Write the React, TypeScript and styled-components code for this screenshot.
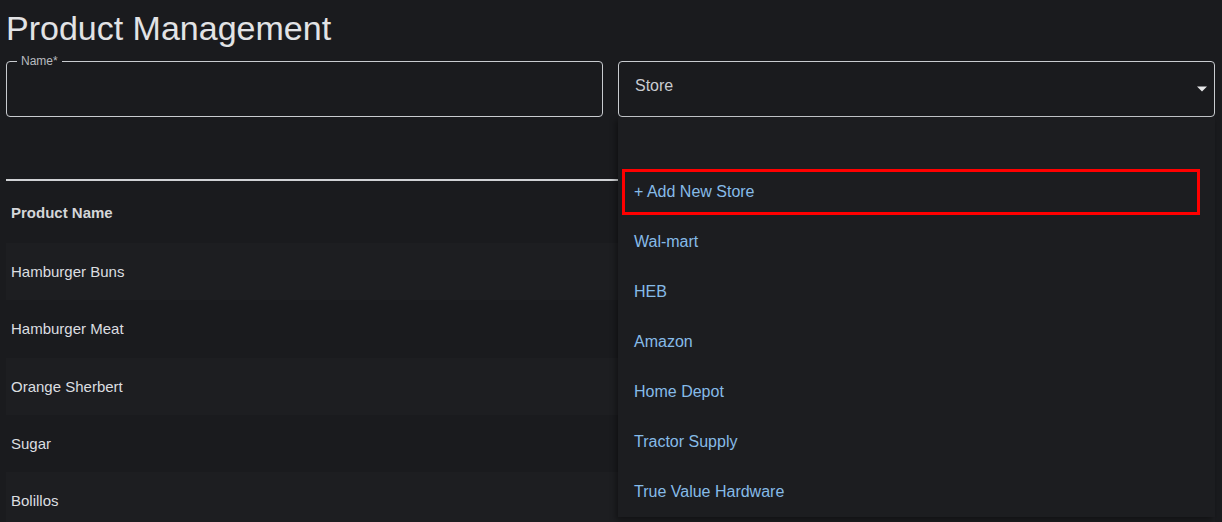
import React, { FC } from "react";
import styled, { createGlobalStyle } from "styled-components";

const GlobalStyle = createGlobalStyle`
  body {
    margin: 0;
    background: #1a1b1e;
    font-family: "Liberation Sans", Arial, sans-serif;
  }
`;

const Page = styled.div`
  position: relative;
  padding: 0 7px 0 6px;
  height: 522px;
  overflow: hidden;
`;

const Title = styled.h1`
  margin: 8px 0 0 0;
  font-size: 34px;
  line-height: 41px;
  font-weight: 400;
  color: #e2e3e5;
`;

const FieldRow = styled.div`
  display: grid;
  grid-template-columns: 1fr 1fr;
  column-gap: 15px;
  margin-top: 12px;
`;

const Outlined = styled.fieldset`
  position: relative;
  margin: 0;
  padding: 0 16px;
  height: 56px;
  box-sizing: border-box;
  border: 1px solid #c9ccd0;
  border-radius: 4px;
  display: flex;
  align-items: center;
`;

const Legend = styled.legend`
  position: absolute;
  top: -8px;
  left: 10px;
  padding: 0 4px;
  background: #1a1b1e;
  font-size: 12px;
  line-height: 14px;
  color: #b9bcc0;
`;

const SelectValue = styled.span`
  flex: 1;
  font-size: 16px;
  color: #c9ccd0;
  margin-top: -6px;
`;

const Arrow = styled.svg`
  position: absolute;
  right: 6px;
  top: 23px;
`;

const Table = styled.div`
  margin-top: 62px;
  border-top: 2px solid #d0d2d5;
`;

const HeaderRow = styled.div`
  height: 62px;
  display: flex;
  align-items: center;
  padding-left: 5px;
  font-size: 15px;
  font-weight: 700;
  color: #d4d6d9;
`;

const Row = styled.div<{ $striped: boolean }>`
  height: 57.3px;
  display: flex;
  align-items: center;
  padding-left: 5px;
  font-size: 15px;
  color: #dcdee0;
  background: ${(p) => (p.$striped ? "#1d1e21" : "transparent")};
`;

const Menu = styled.ul`
  position: absolute;
  top: 117px;
  left: 618px;
  width: 597px;
  margin: 0;
  padding: 0;
  list-style: none;
  background: #1c1d20;
  box-shadow: -2px 3px 6px rgba(0, 0, 0, 0.4);
`;

const Item = styled.li`
  height: 50px;
  display: flex;
  align-items: center;
  padding-left: 16px;
  font-size: 16px;
  color: #86bbe8;
`;

const HighlightItem = styled.li`
  height: 50px;
  box-sizing: border-box;
  padding: 2px 15px 2px 4px;
  display: flex;
`;

const HighlightBox = styled.div`
  flex: 1;
  border: 3px solid #ff0000;
  display: flex;
  align-items: center;
  padding-left: 9px;
  font-size: 16px;
  color: #86bbe8;
`;

const products = ["Hamburger Buns", "Hamburger Meat", "Orange Sherbert", "Sugar", "Bolillos"];
const stores = ["Wal-mart", "HEB", "Amazon", "Home Depot", "Tractor Supply", "True Value Hardware"];

const App: FC = () => {
  return (
    <Page>
      <GlobalStyle />
      <Title>Product Management</Title>
      <FieldRow>
        <Outlined>
          <Legend>Name*</Legend>
        </Outlined>
        <Outlined>
          <SelectValue>Store</SelectValue>
          <Arrow width="12" height="8" viewBox="0 0 12 8">
            <path d="M1 1.5 L11 1.5 L6 6.5 Z" fill="#e6e7e9" />
          </Arrow>
        </Outlined>
      </FieldRow>
      <Table>
        <HeaderRow>Product Name</HeaderRow>
        {products.map((name, i) => (
          <Row key={name} $striped={i % 2 === 0}>
            {name}
          </Row>
        ))}
      </Table>
      <Menu>
        <Item />
        <HighlightItem>
          <HighlightBox>+ Add New Store</HighlightBox>
        </HighlightItem>
        {stores.map((s) => (
          <Item key={s}>{s}</Item>
        ))}
      </Menu>
    </Page>
  );
};

export default App;
